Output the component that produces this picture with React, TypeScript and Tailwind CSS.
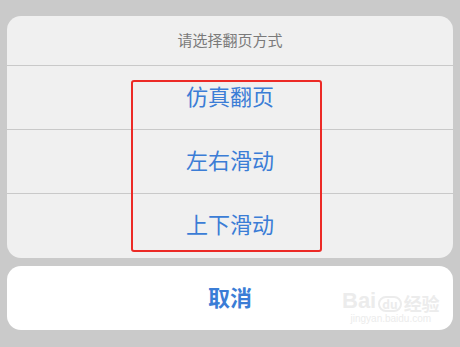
import React from "react";

const options = ["仿真翻页", "左右滑动", "上下滑动"];

export default function App() {
  return (
    <div
      className="relative h-[347px] w-[460px] overflow-hidden bg-[#cacaca] px-[7px] pt-4"
      style={{ fontFamily: '"Noto Sans CJK SC", "Noto Sans", sans-serif' }}
    >
      <div className="flex flex-col overflow-hidden rounded-[14px] bg-[#f0f0f0]">
        <div className="flex h-[49px] items-center justify-center text-[15px] text-[#7a7a7a]">
          请选择翻页方式
        </div>
        {options.map((opt, i) => (
          <div
            key={opt}
            className={
              "flex items-center justify-center border-t border-[#c9c9c9] pb-1 text-[22px] text-[#3b7dd6] " +
              (i === 2 ? "h-[65px] pb-[6px]" : "h-[64px]")
            }
          >
            {opt}
          </div>
        ))}
      </div>

      <div className="mt-2 flex h-[64px] items-center justify-center rounded-[14px] bg-white pb-1 text-[22px] font-bold text-[#3b7dd6]">
        取消
      </div>

      {/* red annotation box */}
      <div className="absolute left-[131px] top-[80px] h-[172px] w-[191px] rounded-[3px] border-[2.5px] border-[#ec2a26]" />

      {/* watermark */}
      <div className="pointer-events-none absolute left-[342px] top-[290px] flex flex-col items-center text-[#ececec]">
        <div className="flex items-end gap-[2px] leading-none">
          <span className="text-[22px] font-bold" style={{ fontFamily: '"Liberation Sans", sans-serif' }}>
            Bai
          </span>
          <span className="rounded-full border-2 border-[#ececec] px-[2px] text-[12px] font-bold">du</span>
          <span className="text-[18px] font-bold">经验</span>
        </div>
        <span className="mt-[2px] text-[10px] leading-none" style={{ fontFamily: '"Liberation Sans", sans-serif' }}>
          jingyan.baidu.com
        </span>
      </div>
    </div>
  );
}
